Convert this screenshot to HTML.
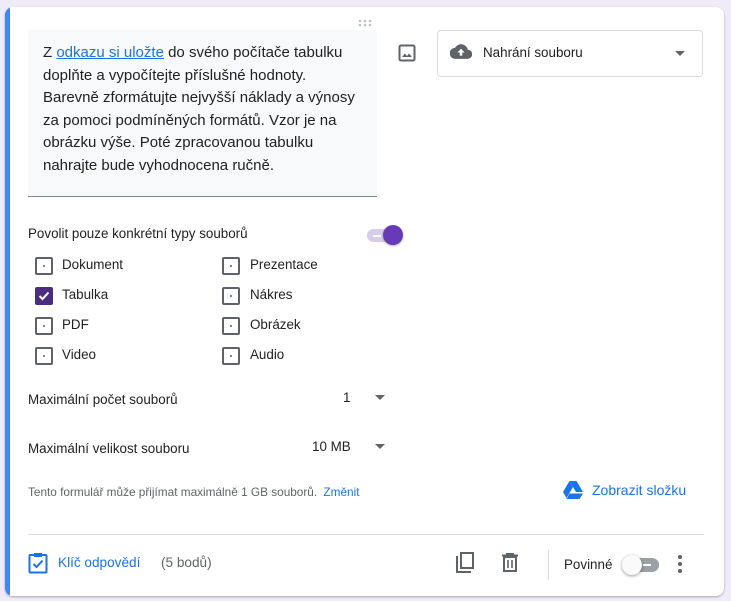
<!DOCTYPE html>
<html><head><meta charset="utf-8"><style>
*{margin:0;padding:0;box-sizing:border-box}
body{width:731px;height:601px;background:#f0ebf8;font-family:"Liberation Sans",Roboto,sans-serif;color:#202124;position:relative;overflow:hidden}
.card{position:absolute;left:5px;top:7px;width:719px;height:589px;background:#fff;border-radius:8px;box-shadow:0 1px 2px rgba(0,0,0,.3);overflow:hidden}
.bar{position:absolute;left:0;top:0;width:5px;height:100%;background:#4285f4}
.a{position:absolute}
.txt{left:23px;top:23px;width:349px;height:167px;background:#f8f9fa;border-bottom:1px solid #80868b;padding:12px 15px;font-size:15px;line-height:22.5px;color:#202124}
.txt a{color:#1a73e8;text-decoration:underline}
.cb{position:absolute;width:18px;height:18px;border:2px solid #5f6368;border-radius:2px}
.cb.e::after{content:"";position:absolute;left:6px;top:6px;width:2px;height:2px;background:#80868b}
.lbl{position:absolute;font-size:13.4px;color:#202124}
</style></head><body>
<div class="card">
<div class="bar"></div>
<div class="a" style="left:353px;top:7px;width:14px;height:8px">
<svg width="14" height="8"><g fill="#bdc1c6"><circle cx="2" cy="2" r="1.3"/><circle cx="7" cy="2" r="1.3"/><circle cx="12" cy="2" r="1.3"/><circle cx="2" cy="6" r="1.3"/><circle cx="7" cy="6" r="1.3"/><circle cx="12" cy="6" r="1.3"/></g></svg></div>
<div class="a txt">Z <a>odkazu si uložte</a> do svého počítače tabulku doplňte a vypočítejte příslušné hodnoty. Barevně zformátujte nejvyšší náklady a výnosy za pomoci podmíněných formátů. Vzor je na obrázku výše. Poté zpracovanou tabulku nahrajte bude vyhodnocena ručně.</div>
<svg class="a" style="left:393px;top:37px" width="18" height="18" viewBox="0 0 18 18"><rect x="1.5" y="1.5" width="15" height="15" rx="1.5" fill="none" stroke="#5f6368" stroke-width="2"/><path d="M4 13l3-3.5 2 2.5 2-2.5 3 3.5z" fill="#5f6368"/></svg>
<div class="a" style="left:432px;top:23px;width:266px;height:47px;border:1px solid #dadce0;border-radius:4px"></div>
<svg class="a" style="left:445px;top:36px" width="22" height="18" viewBox="0 0 24 18"><path d="M19.4 6.5A7.5 7.5 0 0 0 5.4 4.5 6 6 0 0 0 6 16.5h13a5 5 0 0 0 .4-10z" fill="#5f6368"/><path d="M12 5.5l-4 4h2.6v3.5h2.8V9.5H16z" fill="#fff"/></svg>
<div class="lbl" style="left:478px;top:38px">Nahrání souboru</div>
<svg class="a" style="left:670px;top:44px" width="10" height="5"><path d="M0 0h10L5 5z" fill="#5f6368"/></svg>
<div class="lbl" style="left:23px;top:219px">Povolit pouze konkrétní typy souborů</div>
<div class="a" style="left:362px;top:222px;width:34px;height:13px;border-radius:7px;background:#d8cceb"></div>
<div class="a" style="left:368px;top:228px;width:8px;height:1.5px;background:#fff"></div>
<div class="a" style="left:378px;top:218px;width:20px;height:20px;border-radius:50%;background:#673ab7;box-shadow:0 1px 2px rgba(0,0,0,.3)"></div>
<div class="cb e" style="left:30px;top:250px"></div><div class="lbl" style="left:57px;top:250px">Dokument</div>
<div class="cb" style="left:30px;top:280px;background:#4a2c82;border-color:#4a2c82"><svg width="14" height="14" style="position:absolute;left:0;top:0"><path d="M2.5 7l3 3 6-6.5" stroke="#fff" stroke-width="2" fill="none"/></svg></div><div class="lbl" style="left:57px;top:280px">Tabulka</div>
<div class="cb e" style="left:30px;top:310px"></div><div class="lbl" style="left:57px;top:310px">PDF</div>
<div class="cb e" style="left:30px;top:340px"></div><div class="lbl" style="left:57px;top:340px">Video</div>
<div class="cb e" style="left:217px;top:250px"></div><div class="lbl" style="left:245px;top:250px">Prezentace</div>
<div class="cb e" style="left:217px;top:280px"></div><div class="lbl" style="left:245px;top:280px">Nákres</div>
<div class="cb e" style="left:217px;top:310px"></div><div class="lbl" style="left:245px;top:310px">Obrázek</div>
<div class="cb e" style="left:217px;top:340px"></div><div class="lbl" style="left:245px;top:340px">Audio</div>
<div class="lbl" style="left:23px;top:385px">Maximální počet souborů</div>
<div class="lbl" style="left:338px;top:383px">1</div>
<svg class="a" style="left:370px;top:388px" width="10" height="5"><path d="M0 0h10L5 5z" fill="#5f6368"/></svg>
<div class="lbl" style="left:23px;top:434px">Maximální velikost souboru</div>
<div class="lbl" style="left:307px;top:432px">10 MB</div>
<svg class="a" style="left:370px;top:437px" width="10" height="5"><path d="M0 0h10L5 5z" fill="#5f6368"/></svg>
<div class="a" style="left:23px;top:478px;font-size:11.8px;color:#5f6368">Tento formulář může přijímat maximálně 1 GB souborů. <span style="color:#1a73e8;margin-left:3px">Změnit</span></div>
<svg class="a" style="left:558px;top:474px" width="20" height="18" viewBox="0 0 20 18"><path d="M6.5 0h7l6.5 11h-7z" fill="#1a73e8"/><path d="M6.5 0L0 11l3.5 6 6.5-11z" fill="#1a73e8"/><path d="M6.5 12.5h13.5l-3.5 5.5H3.5z" fill="#1a73e8"/></svg>
<div class="a" style="left:587px;top:475px;font-size:14px;color:#1a73e8">Zobrazit složku</div>
<div class="a" style="left:23px;top:527px;width:676px;height:1px;background:#dadce0"></div>
<svg class="a" style="left:23px;top:545px" width="20" height="22" viewBox="0 0 20 22"><rect x="1.5" y="3" width="17" height="17.5" rx="1" fill="none" stroke="#1a73e8" stroke-width="2"/><rect x="6" y="1" width="8" height="4" fill="#1a73e8"/><path d="M5.5 12l3 3 6-6.5" stroke="#1a73e8" stroke-width="2" fill="none"/></svg>
<div class="a" style="left:53px;top:548px;font-size:13.6px;color:#1a73e8">Klíč odpovědí</div>
<div class="a" style="left:156px;top:548px;font-size:13.6px;color:#5f6368">(5 bodů)</div>
<svg class="a" style="left:450px;top:545px" width="20" height="22" viewBox="0 0 20 22"><path d="M2 4v16h14" fill="none" stroke="#5f6368" stroke-width="2"/><rect x="6" y="1" width="12" height="15" fill="none" stroke="#5f6368" stroke-width="2"/></svg>
<svg class="a" style="left:497px;top:546px" width="16" height="19" viewBox="0 0 16 19"><path d="M0 2.5h16M5 2.5V.5h6v2" stroke="#5f6368" stroke-width="2" fill="none"/><rect x="2" y="4" width="12" height="14" fill="none" stroke="#5f6368" stroke-width="2"/><path d="M6 7v8M10 7v8" stroke="#5f6368" stroke-width="1.6"/></svg>
<div class="a" style="left:543px;top:543px;width:1px;height:30px;background:#dadce0"></div>
<div class="a" style="left:559px;top:550px;font-size:13.4px;color:#202124">Povinné</div>
<div class="a" style="left:620px;top:551px;width:34px;height:14px;border-radius:7px;background:#9aa0a6"></div>
<div class="a" style="left:638px;top:557px;width:8px;height:2px;background:#fff"></div>
<div class="a" style="left:617px;top:548px;width:20px;height:20px;border-radius:50%;background:#fafafa;box-shadow:0 1px 3px rgba(0,0,0,.4)"></div>
<svg class="a" style="left:673px;top:548px" width="4" height="18"><g fill="#5f6368"><circle cx="2" cy="2" r="2"/><circle cx="2" cy="9" r="2"/><circle cx="2" cy="16" r="2"/></g></svg>
</div>
</body></html>
